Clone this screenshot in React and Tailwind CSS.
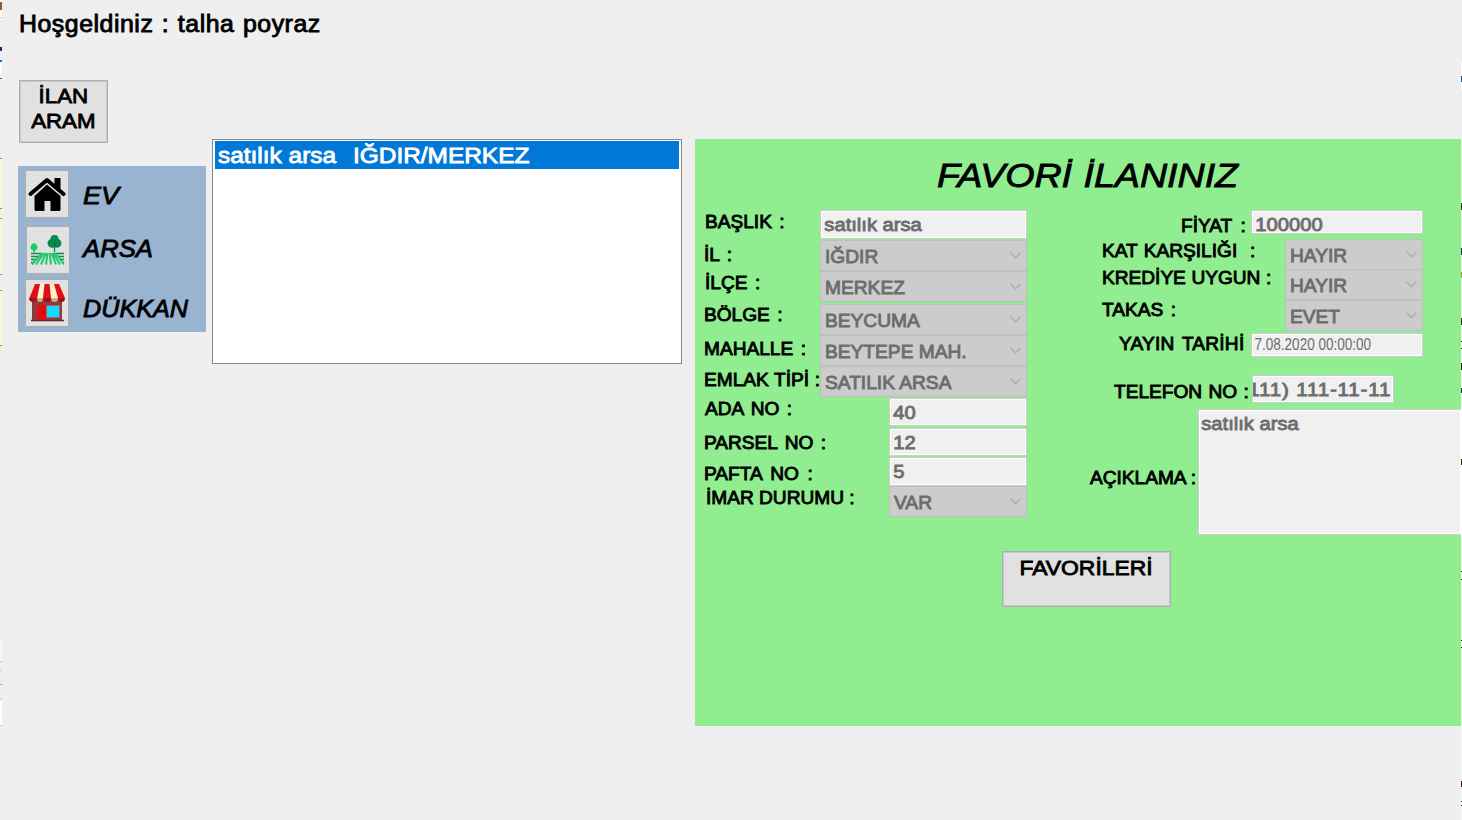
import React from "react";

const STROKE = "[-webkit-text-stroke:0.85px_currentColor]";

function Text({ className = "", origin = "origin-left", children }) {
  return (
    <span className={`inline-block whitespace-pre ${origin} ${STROKE} ${className}`}>
      {children}
    </span>
  );
}

function Strip({ parts, className }) {
  return (
    <div className={`flex shrink-0 flex-col ${className}`}>
      {parts.map(([h, color], i) => (
        <div key={i} className="shrink-0" style={{ height: h, backgroundColor: color }} />
      ))}
    </div>
  );
}

const B = "#efefef";
const leftEdge = [
  [2, "#fff"], [8, "#8a5a3a"], [7, "#fff"], [1, "#c8c8d8"], [29, "#eeeef4"], [4, "#2a2a3a"], [9, "#eeeef4"], [2, "#0078d7"],
  [16, "#fafafa"], [1, "#555"], [79, B], [1, "#b09020"], [49, "#fffbd0"], [1, "#b09020"], [9, B], [1, "#b09020"],
  [55, "#fffbd0"], [1, "#b09020"], [15, B], [1, "#b09020"], [54, "#fffbd0"], [1, "#b09020"], [294, B],
  [21, "#f8f8f8"], [1, "#c8c8d8"], [8, "#ececf4"], [1, "#c8c8d8"], [13, "#ececf4"], [1, "#aaa"], [14, "#ececf4"], [1, "#c8c8d8"],
  [25, "#fff"], [1, "#c8c8d8"], [94, B],
];
const rightEdge = [
  [63, "#efefef"], [13, "#fff"], [6, "#2060a8"], [9, "#fff"], [112, "#efefef"], [7, "#602838"], [38, "#f5f5f5"], [7, "#203050"], [17, "#f5f5f5"], [6, "#c08830"],
  [40, "#f5f5f5"], [7, "#602838"], [16, "#fff"], [1, "#111"], [6, "#fff"], [1, "#111"], [14, "#fff"], [7, "#402010"],
  [18, "#fff"], [5, "#203050"], [66, "#fff"], [6, "#302010"], [106, "#fff"], [1, "#111"], [7, "#fff"], [1, "#111"],
  [60, "#fff"], [1, "#111"], [6, "#fff"], [1, "#111"], [133, "#f8f8f8"], [6, "#503020"], [14, "#f8f8f8"], [1, "#111"], [3, "#fff"], [1, "#111"], [15, "#f8f8f8"],
];

function Combo({ className, children }) {
  return (
    <div className={`flex shrink-0 items-center justify-between border border-[#bfbfbf] bg-[#cccccc] pl-1 pr-[5px] text-[18px] leading-5 text-[#6d6d6d] ${className}`}>
      <Text className="scale-x-[1.065] pt-[2px]">{children}</Text>
      <svg className="h-[7px] w-[11px] shrink-0" viewBox="0 0 11 7" fill="none" stroke="#adadad" strokeWidth="1.4">
        <path d="M.6 .8 5.5 5.7 10.4 .8" />
      </svg>
    </div>
  );
}

function Input({ className, children }) {
  return (
    <div className={`shrink-0 overflow-hidden border border-[#cccccc] bg-[#f0f0f0] text-[18px] leading-5 text-[#6d6d6d] shadow-[inset_0_0_0_1px_#fff] ${className}`}>
      {children}
    </div>
  );
}

function Label({ className, spacing = "[word-spacing:2px]", children }) {
  return (
    <div className={`h-5 shrink-0 text-[17.7px] leading-5 text-black ${className}`}>
      <Text className={`scale-x-[1.08] ${spacing}`}>{children}</Text>
    </div>
  );
}

function HouseIcon() {
  return (
    <svg className="h-[34px] w-[38px] shrink-0" viewBox="0 0 38 34">
      <path d="M2.500 17 19 3 35.500 17" fill="none" stroke="#000" strokeWidth="4" strokeLinecap="round" strokeLinejoin="round" />
      <path d="M26.500 1h6v12l-6-5z" />
      <path d="M19 7.500 32.500 19v13.500a1.500 1.500 0 0 1-1.500 1.500h-8.500V24h-6v10H8a1.500 1.500 0 0 1-1.500-1.500V19z" />
    </svg>
  );
}

function FieldIcon() {
  return (
    <svg className="h-[32px] w-[36px] shrink-0" viewBox="0 0 36 32">
      <path d="M4 10v8M24.500 8v10" stroke="#0a7a45" strokeWidth="1.200" />
      <path d="M4 9c2 1 3.500 2.500 3.500 4.500S6 16.500 4 16.500s-3.500-1-3.500-3S2 10 4 9z" fill="#10cf62" />
      <path d="M24.500 1a4 4 0 0 1 4 4 4.500 4.500 0 1 1-4 8 4.500 4.500 0 1 1-4-8 4 4 0 0 1 4-4z" fill="#078a50" />
      <path d="m24.500 6v8m0-3 3-3" stroke="#056b3d" fill="none" />
      <path d="M1 19.500h11M1 22.500h9M1 25.500h6M1 28.500h3M24 19.500h10M27 22.500h7M30 25.500h4M32 28.500h2" stroke="#0a8a50" strokeWidth="1.600" />
      <path d="M12 19 2 30.500M14 19 6 30.500M16 19l-5 11.500M17.500 19 16 30.500M19.500 19 21 30.500M21.500 19l4.500 11.500M23 19l7 11.500M25 19l9 11.500" stroke="#20c96b" strokeWidth="2" />
    </svg>
  );
}

function ShopIcon() {
  return (
    <svg className="h-[38px] w-[38px] shrink-0" viewBox="0 0 38 38">
      <path d="M4 15h30v21H4z" fill="#8e3b42" />
      <path d="M3 36.500h33" stroke="#5b2a35" strokeWidth="1.500" />
      <path d="M9 21h9v15H9z" fill="#e01010" />
      <path d="M15.500 27v3" stroke="#701010" />
      <path d="M18.500 21.500h13v12h-13z" fill="#10dcff" stroke="#b06060" />
      <path d="M7 0h24l6 14H1z" fill="#fff3cf" />
      <path d="M7 0h5L9 15H1zM16.500 0h5l1.500 14h-8zM26 0h5l6 14h-7z" fill="#df1018" />
      <path d="M1 14h8a4 4 0 0 1-8 0zM15 14h8a4 4 0 0 1-8 0zM30 14h7a3.500 4 0 0 1-7 0z" fill="#a80c18" />
      <path d="M9 14h6a3 4 0 0 1-6 0zM23 14h7a3.500 4 0 0 1-7 0z" fill="#d9ad72" />
    </svg>
  );
}

function NavRow({ className, icon, label, labelClass, textClass }) {
  return (
    <div className={`flex ${className}`}>
      <div className="flex h-12 w-11 shrink-0 items-center justify-center border border-[#adadad] bg-[#e1e1e1]">{icon}</div>
      <div className={`text-[24px] italic leading-7 ${labelClass}`}>
        <Text className={textClass}>{label}</Text>
      </div>
    </div>
  );
}

const leftRows = [
  ["BAŞLIK :", "h-[30px]", "pl-[10px] pt-[2px] w-[125px]", "input", "satılık arsa", "h-[29px] w-[207px]", "scale-x-[1.12] pl-[3px] pt-[4px]"],
  ["İL :", "h-[31px]", "pl-[9px] pt-[5px] w-[125px]", "combo", "IĞDIR", "h-[31px] w-[207px]"],
  ["İLÇE :", "h-[33px]", "pl-[10px] pt-[2px] w-[125px]", "combo", "MERKEZ", "h-[31px] w-[207px]"],
  ["BÖLGE :", "h-[31px]", "pl-[9px] pt-[1px] w-[125px]", "combo", "BEYCUMA", "h-[31px] w-[207px]"],
  ["MAHALLE :", "h-[31px]", "pl-[9px] pt-[4px] w-[125px]", "combo", "BEYTEPE MAH.", "h-[31px] w-[207px]"],
  ["EMLAK TİPİ :", "h-[32px]", "pl-[9px] pt-[4px] w-[125px]", "combo", "SATILIK ARSA", "h-[31px] w-[207px]", "", "[word-spacing:0.3px]"],
  ["ADA NO :", "h-[30px]", "pl-[10px] pt-[1px] w-[194px]", "input", "40", "h-[28px] w-[138px]", "scale-x-[1.12] pl-[3px] pt-[4px]"],
  ["PARSEL NO :", "h-[29px]", "pl-[9px] pt-[5px] w-[194px]", "input", "12", "h-[28px] w-[138px]", "scale-x-[1.12] pl-[3px] pt-[4px]"],
  ["PAFTA NO :", "h-[29px]", "pl-[9px] pt-[7px] w-[194px]", "input", "5", "h-[29px] w-[138px]", "scale-x-[1.12] pl-[3px] pt-[4px]", "[word-spacing:3px]"],
  ["İMAR DURUMU :", "h-[31px]", "pl-[11px] pt-[2px] w-[194px]", "combo", "VAR", "h-[31px] w-[138px]", "", "[word-spacing:0px]"],
];

export default function App() {
  return (
    <div className="flex h-[820px] w-[1462px] overflow-hidden bg-[#efefef] font-['Liberation_Sans',sans-serif] text-black">
      <Strip parts={leftEdge} className="w-[2px]" />
      <div className="flex w-[1459px] shrink-0 flex-col overflow-hidden">
        <div className="h-20 shrink-0 pl-[17px] pt-[10px] text-[23px] leading-7">
          <Text className="scale-x-[1.08] tracking-[0.5px] [word-spacing:1px]">Hoşgeldiniz : talha poyraz</Text>
        </div>
        <div className="flex">
          <div className="ml-4 w-[188px] shrink-0">
            <button className="ml-px flex h-[63px] w-[89px] flex-col items-center border border-[#adadad] bg-[#e1e1e1] pr-px pt-[2px] text-[21px] leading-[25px] shadow-[inset_0_0_0_1px_#cacaca]">
              <Text origin="origin-center" className="scale-x-[1.06]">İLAN</Text>
              <Text origin="origin-center" className="scale-x-[1.06]">ARAM</Text>
            </button>
            <nav className="mt-[23px] h-[166px] bg-[#99b4d1] pt-1">
              <NavRow className="pl-[7px]" icon={<HouseIcon />} label="EV" labelClass="pl-[14px] pt-[12px]" textClass="scale-x-[1.12]" />
              <NavRow className="mt-2 pl-2" icon={<FieldIcon />} label="ARSA" labelClass="pl-[13px] pt-[9px]" textClass="scale-x-[1.07]" />
              <NavRow className="mt-[5px] pl-[7px]" icon={<ShopIcon />} label="DÜKKAN" labelClass="pl-[14px] pt-[16px]" textClass="scale-x-[1.05]" />
            </nav>
          </div>
          <div className="ml-[6px] mt-[59px] h-[225px] w-[470px] shrink-0 border border-[#828790] bg-white p-[2px] pt-px">
            <div className="h-[28px] bg-[#0078d7] pl-[3px] text-[22px] leading-[30px] text-white">
              <Text className="scale-x-[1.11]">{"satılık arsa"}<span className="pl-[3px]">{"  IĞDIR/MERKEZ"}</span></Text>
            </div>
          </div>
          <section className="ml-[13px] mt-[59px] flex h-[587px] w-[766px] shrink-0 flex-col bg-[#90ee90]">
            <h1 className="h-[71px] shrink-0 pl-[242px] pt-[16px] text-[34px] italic leading-10">
              <Text className="scale-x-[1.105] [word-spacing:1px]">FAVORİ İLANINIZ</Text>
            </h1>
            <div className="flex h-[341px] shrink-0">
              <div className="w-[332px] shrink-0">
                {leftRows.map(([label, row, lab, kind, value, size, txt, spacing]) => (
                  <div key={label} className={`flex ${row}`}>
                    <Label className={lab} spacing={spacing}>{label}</Label>
                    {kind === "combo" ? (
                      <Combo className={size}>{value}</Combo>
                    ) : (
                      <Input className={size}><Text className={txt}>{value}</Text></Input>
                    )}
                  </div>
                ))}
              </div>
              <div className="w-[434px] shrink-0">
                <div className="flex h-[29px]">
                  <Label className="w-[224px] pl-[154px] pt-[6px]" spacing="[word-spacing:3px]">FİYAT :</Label>
                  <Input className="h-6 w-[172px]"><Text className="h-[21px] scale-x-[1.12] pl-[3px] pt-[4px]">100000</Text></Input>
                </div>
                <div className="flex h-[30px]">
                  <Label className="w-[258px] pl-[75px] pt-[2px]" spacing="[word-spacing:1px]">{"KAT KARŞILIĞI  :"}</Label>
                  <Combo className="h-[31px] w-[138px]">HAYIR</Combo>
                </div>
                <div className="flex h-[31px]">
                  <Label className="w-[258px] pl-[75px] -mt-px" spacing="[word-spacing:0.2px]">KREDİYE UYGUN :</Label>
                  <Combo className="h-[31px] w-[138px]">HAYIR</Combo>
                </div>
                <div className="flex h-[33px]">
                  <Label className="w-[258px] pl-[75px]">TAKAS :</Label>
                  <Combo className="h-[31px] w-[138px]">EVET</Combo>
                </div>
                <div className="flex h-[42px]">
                  <Label className="w-[224px] pl-[92px] pt-px tracking-[0.2px]">YAYIN TARİHİ</Label>
                  <Input className="h-6 w-[172px]">
                    <span className="inline-block origin-left scale-x-[0.845] whitespace-pre pl-[3px] pt-px text-[16px]">7.08.2020 00:00:00</span>
                  </Input>
                </div>
                <div className="flex h-[34px]">
                  <Label className="w-[225px] pl-[87px] pt-[7px]" spacing="[word-spacing:1px]">TELEFON NO :</Label>
                  <Input className="flex h-[28px] w-[142px] justify-end pr-[2px] pt-[4px]">
                    <Text origin="origin-right" className="scale-x-[1.14] tracking-[0.75px]">(111) 111-11-11</Text>
                  </Input>
                </div>
                <div className="flex h-[126px]">
                  <Label className="w-[171px] pl-[63px] pt-[59px]" spacing="[word-spacing:0px]">AÇIKLAMA :</Label>
                  <Input className="h-[126px] w-[263px] border-r-0"><Text className="scale-x-[1.12] pl-[2px] pt-[4px]">satılık arsa</Text></Input>
                </div>
              </div>
            </div>
            <button className="ml-[307px] flex h-14 w-[169px] shrink-0 justify-center border border-[#adadad] bg-[#e1e1e1] pr-px pt-[3px] text-[21px] leading-[25px] shadow-[inset_0_0_0_1px_#cacaca]">
              <Text origin="origin-center" className="scale-x-[1.09]">FAVORİLERİ</Text>
            </button>
          </section>
        </div>
      </div>
      <Strip parts={rightEdge} className="w-px" />
    </div>
  );
}
